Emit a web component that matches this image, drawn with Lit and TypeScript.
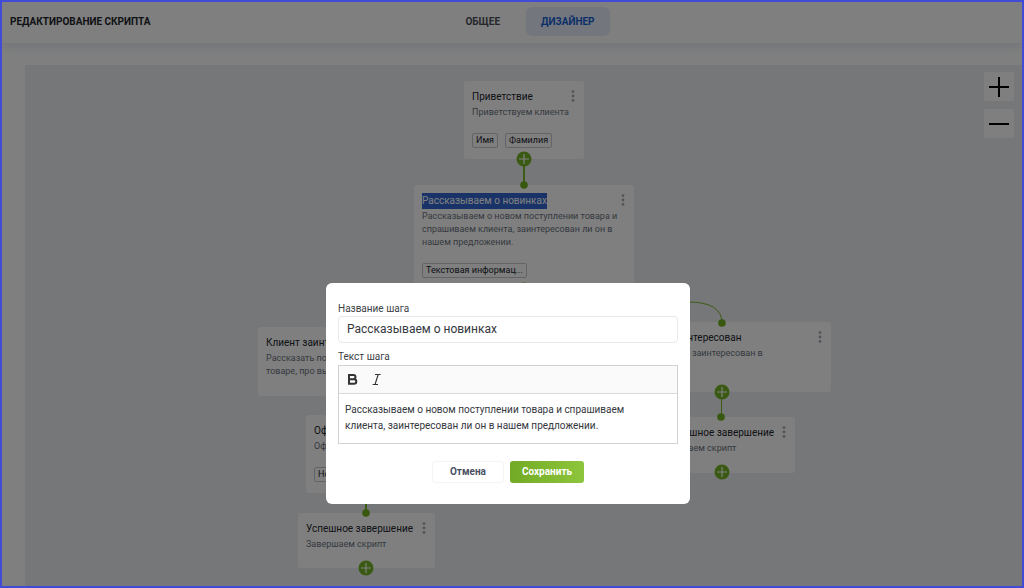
import { LitElement, html, css, svg } from "lit";
import { customElement, property, state } from "lit/decorators.js";
import { styleMap } from "lit/directives/style-map.js";

interface Step {
  x: number;
  y: number;
  w: number;
  h: number;
  title: string;
  text: string;
  tags: string[];
  selected?: boolean;
}

const STEPS: Step[] = [
  { x: 439, y: 16, w: 120, h: 78, title: "Приветствие", text: "Приветствуем клиента", tags: ["Имя", "Фамилия"] },
  { x: 389, y: 120, w: 220, h: 110, title: "Рассказываем о новинках", text: "Рассказываем о новом поступлении товара и спрашиваем клиента, заинтересован ли он в нашем предложении.", tags: ["Текстовая информац..."], selected: true },
  { x: 233, y: 262, w: 220, h: 69, title: "Клиент заинтересован", text: "Рассказать подробнее о поступившем сегодня товаре, про выгоды", tags: [] },
  { x: 588, y: 257, w: 218, h: 70, title: "Клиент не заинтересован", text: "Когда клиент не заинтересован в предложенном", tags: [] },
  { x: 281, y: 350, w: 120, h: 78, title: "Оформление", text: "Оформляем заказ", tags: ["Номер"] },
  { x: 273, y: 448, w: 137, h: 55, title: "Успешное завершение", text: "Завершаем скрипт", tags: [] },
  { x: 623, y: 352, w: 147, h: 56, title: "Неуспешное завершение", text: "Завершаем скрипт", tags: [] },
];

const ADD_POINTS = [[499, 94], [499, 225], [697, 327], [697, 407], [341, 503]];
const ENTRY_POINTS = [[499, 120], [697, 258], [696, 352], [341, 448]];
const LINKS = [
  { d: "M499 94V120", width: 2 },
  { d: "M499 220V230Q499 237 507 237H663Q697 237 697 258", width: 1 },
  { d: "M696.5 327V352", width: 1 },
  { d: "M341 428V448", width: 2 },
];

@customElement("script-step")
class ScriptStep extends LitElement {
  @property({ attribute: false }) step!: Step;

  static styles = css`
    :host { display: block; box-sizing: border-box; padding: 8px 8px; background: #fff; border-radius: 3px; overflow: hidden; }
    .head { display: flex; justify-content: space-between; align-items: flex-start; height: 16px; }
    .title { margin: 0; font-size: 10px; line-height: 16px; font-weight: 400; color: #20242c; white-space: nowrap; }
    .selected { background: #3367d1; color: #fff; }
    .menu { flex: none; padding: 0; border: 0; background: none; width: 6px; height: 12px; color: #a4a9b2; margin-top: 1px; }
    .menu svg { display: block; }
    .text { margin: 1px 0 0; font-size: 9px; line-height: 13px; color: #6b7480; }
    .tags { display: flex; gap: 7px; margin-top: 14px; }
    .tag { box-sizing: border-box; height: 15px; padding: 0 3px; border: 1px solid #c4c8ce; border-radius: 2px; font-size: 9px; line-height: 13px; color: #20242c; white-space: nowrap; }
  `;

  render() {
    const s = this.step;
    return html`
      <div class="head">
        <h2 class="title ${s.selected ? "selected" : ""}">${s.title}</h2>
        <button class="menu" aria-label="Меню шага">
          <svg width="6" height="12" viewBox="0 0 6 12" fill="currentColor"><circle cx="3" cy="1.6" r="1.4"/><circle cx="3" cy="6" r="1.4"/><circle cx="3" cy="10.4" r="1.4"/></svg>
        </button>
      </div>
      <p class="text">${s.text}</p>
      ${s.tags.length ? html`<div class="tags">${s.tags.map((t) => html`<span class="tag">${t}</span>`)}</div>` : null}
    `;
  }
}

@customElement("step-dialog")
class StepDialog extends LitElement {
  @state() private name = "Рассказываем о новинках";

  static styles = css`
    :host { display: block; box-sizing: border-box; width: 364px; max-width: 100%; padding: 18px 12px 21px; background: #fff; border-radius: 6px; color: #3c3f46; }
    .label { display: block; font-size: 10px; line-height: 15px; }
    .name { display: block; box-sizing: border-box; width: 100%; height: 27px; margin: 0 0 6px; padding: 0 8px 2px; border: 1px solid #e8e9eb; border-radius: 4px; background: #fff; font: 12px/16px Roboto, sans-serif; color: #34373d; outline: none; }
    .editor { border: 1px solid #d2d2d2; margin-top: 1px; }
    .toolbar { display: flex; gap: 5px; height: 27px; align-items: center; padding-left: 3px; background: #fafafa; border-bottom: 1px solid #d9d9d9; }
    .tool { width: 20px; height: 22px; padding: 0; border: 0; background: none; color: #333; }
    .tool svg { display: block; }
    .body { display: block; box-sizing: border-box; width: 100%; height: 49px; resize: none; border: 0; outline: none; margin: 0; padding: 8px 24px 8px 6px; background: #fff; font: 10px/16px Roboto, sans-serif; color: #34373d; overflow: hidden; }
    .actions { display: flex; justify-content: center; gap: 6px; margin-top: 17px; }
    .btn { box-sizing: border-box; height: 22px; border-radius: 3px; font: 700 10px/16px Roboto, sans-serif; padding: 0 12px; }
    .cancel { border: 1px solid #f3f4f6; background: #fff; color: #4a5163; padding: 0 17px; }
    .save { border: 0; background: linear-gradient(90deg, #72aa25, #8dc63c); color: #fff; }
  `;

  render() {
    return html`
      <label class="label" for="name">Название шага</label>
      <input class="name" id="name" .value=${this.name} @input=${(e: Event) => (this.name = (e.target as HTMLInputElement).value)} />
      <label class="label" for="text">Текст шага</label>
      <div class="editor">
        <div class="toolbar">
          <button class="tool" aria-label="Полужирный">
            <svg width="20" height="20" viewBox="0 0 20 20" fill="none" stroke="currentColor" stroke-width="2"><path d="M7 5H11.4A2 2 0 0 1 11.4 9.2H7ZM7 9.2H12A2.2 2.2 0 0 1 12 13.8H7Z"/></svg>
          </button>
          <button class="tool" aria-label="Курсив">
            <svg width="20" height="20" viewBox="0 0 20 20" fill="none" stroke="currentColor" stroke-width="1.1"><path d="M8 4.5H13.6M5.6 14.5H11M11.2 4.5L8 14.5"/></svg>
          </button>
        </div>
        <textarea class="body" id="text" .value=${"Рассказываем о новом поступлении товара и спрашиваем клиента, заинтересован ли он в нашем предложении."}></textarea>
      </div>
      <div class="actions">
        <button class="btn cancel">Отмена</button>
        <button class="btn save">Сохранить</button>
      </div>
    `;
  }
}

@customElement("app-root")
class AppRoot extends LitElement {
  static styles = css`
    :host { display: flex; flex-direction: column; box-sizing: border-box; height: 100vh; border: 2px solid #424bd6; position: relative; overflow: hidden; background: #fff; font-family: Roboto, sans-serif; }
    .header { display: grid; grid-template-columns: 1fr auto 1fr; align-items: center; column-gap: 14px; flex: none; box-sizing: border-box; height: 41px; padding: 0 0 3px 8px; background: #fff; box-shadow: 0 4px 10px rgba(130, 155, 195, 0.22); }
    .heading { margin: 0; font-size: 10px; line-height: 15px; font-weight: 700; color: #22252b; }
    .tabs { display: flex; gap: 11px; margin-left: 28px; }
    .tab { height: 29px; padding: 0 15px; border: 0; border-radius: 6px; background: none; font: 700 10px/15px Roboto, sans-serif; color: #4b4f58; }
    .active { background: #e6ecfa; color: #1760d2; }
    .canvas { position: relative; flex: 1; margin: 22px 0 0 23px; background: #eceff3; overflow: hidden; }
    .links { position: absolute; inset: 0; width: 100%; height: 100%; pointer-events: none; }
    script-step { position: absolute; }
    .zoom { position: absolute; top: 7px; right: 8px; display: grid; gap: 8px; }
    .zoom-btn { width: 30px; height: 29px; padding: 0; border: 0; background: #fff; color: #000; }
    .zoom-btn svg { display: block; margin: auto; }
    .scrim { position: absolute; inset: 0; display: flex; justify-content: center; align-items: flex-start; padding: 281px 8px 0 0; background: rgba(0, 0, 0, 0.5); }
  `;

  render() {
    return html`
      <header class="header">
        <h1 class="heading">РЕДАКТИРОВАНИЕ СКРИПТА</h1>
        <nav class="tabs">
          <button class="tab">ОБЩЕЕ</button>
          <button class="tab active">ДИЗАЙНЕР</button>
        </nav>
      </header>
      <main class="canvas">
        ${STEPS.map((s) => html`<script-step .step=${s} style=${styleMap({ left: `${s.x}px`, top: `${s.y}px`, width: `${s.w}px`, height: `${s.h}px` })}></script-step>`)}
        <svg class="links">
          ${LINKS.map((l) => svg`<path d=${l.d} fill="none" stroke="#78b82a" stroke-width=${l.width}/>`)}
          ${ENTRY_POINTS.map(([x, y]) => svg`<circle cx=${x} cy=${y} r="3.8" fill="#6fb01c"/>`)}
          ${ADD_POINTS.map(([x, y]) => svg`<g transform="translate(${x} ${y})"><circle r="7.5" fill="#74b324"/><path d="M-5 0H5M0 -5V5" stroke="#fff" stroke-width="1.2"/></g>`)}
        </svg>
        <div class="zoom">
          <button class="zoom-btn" aria-label="Увеличить"><svg width="22" height="22" viewBox="0 0 22 22"><path d="M1 11H21M11 1V21" stroke="currentColor" stroke-width="2"/></svg></button>
          <button class="zoom-btn" aria-label="Уменьшить"><svg width="22" height="22" viewBox="0 0 22 22"><path d="M1 11H21" stroke="currentColor" stroke-width="2"/></svg></button>
        </div>
      </main>
      <div class="scrim"><step-dialog role="dialog" aria-modal="true"></step-dialog></div>
    `;
  }
}
